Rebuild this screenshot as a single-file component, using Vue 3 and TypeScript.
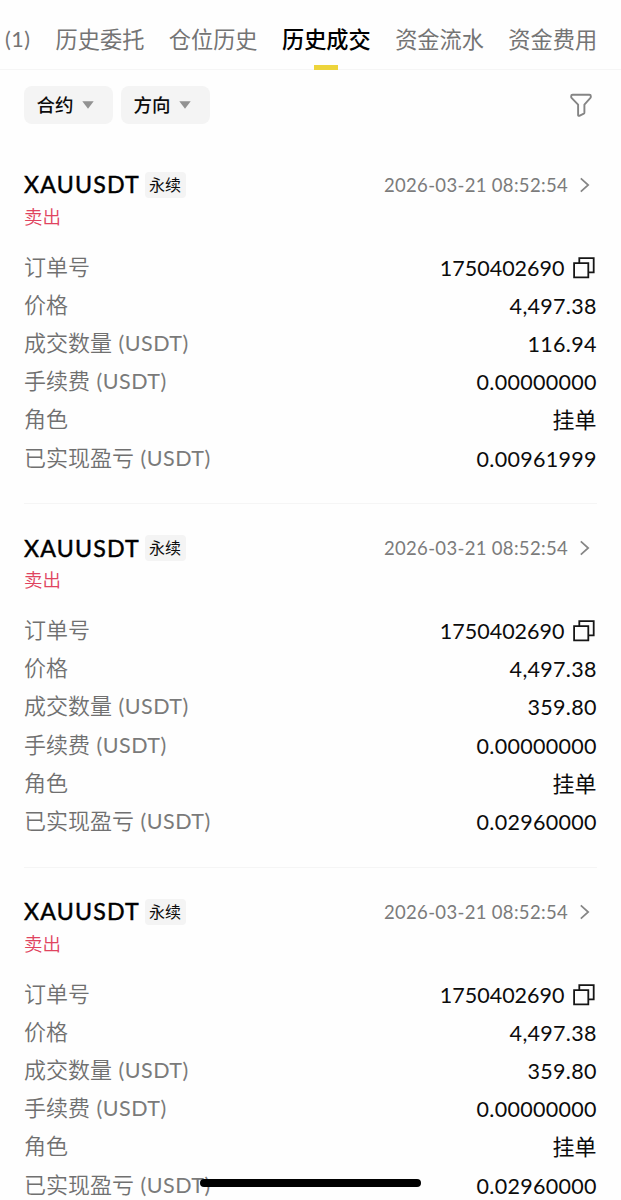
<script setup lang="ts">
interface Field {
  label: string
  unit?: string
  value: string
  copy?: boolean
  cjk?: boolean
}
interface Trade {
  symbol: string
  kind: string
  side: string
  time: string
  fields: Field[]
}

const tabs: string[] = ['历史委托', '仓位历史', '历史成交', '资金流水', '资金费用']
const activeTab = '历史成交'
const filters: string[] = ['合约', '方向']

function makeTrade(amount: string, pnl: string): Trade {
  return {
    symbol: 'XAUUSDT',
    kind: '永续',
    side: '卖出',
    time: '2026-03-21 08:52:54',
    fields: [
      { label: '订单号', value: '1750402690', copy: true },
      { label: '价格', value: '4,497.38' },
      { label: '成交数量', unit: '(USDT)', value: amount },
      { label: '手续费', unit: '(USDT)', value: '0.00000000' },
      { label: '角色', value: '挂单', cjk: true },
      { label: '已实现盈亏', unit: '(USDT)', value: pnl },
    ],
  }
}

const trades: Trade[] = [
  makeTrade('116.94', '0.00961999'),
  makeTrade('359.80', '0.02960000'),
  makeTrade('359.80', '0.02960000'),
]
</script>

<template>
  <main class="screen">
    <nav class="tabs">
      <span class="count">(1)</span>
      <span v-for="t in tabs" :key="t" class="tab" :class="{ active: t === activeTab }">{{ t }}</span>
    </nav>

    <div class="filters">
      <button v-for="f in filters" :key="f" class="chip" type="button">
        <span>{{ f }}</span>
        <svg width="12" height="8" viewBox="0 0 12 8"><path d="M0.3 0.2H11.7L6 7.8Z" fill="#929292" /></svg>
      </button>
      <svg class="funnel" width="24" height="26" viewBox="0 0 24 26">
        <path
          d="M3.6 2.8H20.4Q21.8 2.8 21.8 4V5Q21.8 5.6 21.2 6.2L15.4 12.6V20.6Q15.4 21.4 14.8 21.7L10.3 23.8Q9.1 24.2 9.1 23V12.6L2.8 6.2Q2.2 5.6 2.2 5V4Q2.2 2.8 3.6 2.8Z"
          fill="none" stroke="#858585" stroke-width="1.9" stroke-linejoin="round"
        />
      </svg>
    </div>

    <section v-for="(trade, i) in trades" :key="i" class="card">
      <header class="head">
        <span class="symbol">{{ trade.symbol }}</span>
        <span class="badge">{{ trade.kind }}</span>
        <span class="time">{{ trade.time }}</span>
        <svg class="chevron" width="10" height="16" viewBox="0 0 10 16">
          <path d="M0.8 1.4L8.2 8L0.8 14.6" fill="none" stroke="#858585" stroke-width="1.7" />
        </svg>
      </header>
      <div class="side">{{ trade.side }}</div>
      <div v-for="f in trade.fields" :key="f.label" class="row">
        <span class="label">{{ f.label }}<span v-if="f.unit" class="unit">{{ f.unit }}</span></span>
        <span class="value" :class="{ cjk: f.cjk, decimal: f.value.includes('.') }">{{ f.value }}</span>
        <svg v-if="f.copy" class="copy" width="22" height="22" viewBox="0 0 22 22">
          <path d="M1.1 6.1H15.3V20.4H1.1Z M6.3 6V1.1H20.7V15.3H15.5" fill="none" stroke="#161616" stroke-width="1.8" />
        </svg>
      </div>
    </section>

    <div class="home-bar"></div>
  </main>
</template>

<style>
body {
  margin: 0;
  background: #fff;
}
</style>

<style scoped>
.screen {
  position: relative;
  width: 621px;
  height: 1200px;
  overflow: hidden;
  box-sizing: border-box;
  background: #fefefe;
  color: #0c0c0c;
  font-family: Lato, "Noto Sans CJK SC", sans-serif;
}
.tabs {
  display: flex;
  height: 69px;
  border-bottom: 1px solid #f5f5f5;
  font-size: 22.2px;
  line-height: 80px;
  color: #747474;
  white-space: nowrap;
}
.count {
  flex: none;
  width: 50.6px;
  padding-left: 5px;
  font-size: 21.5px;
  letter-spacing: 0.5px;
  line-height: 79px;
}
.tab {
  position: relative;
  width: 89px;
  margin-right: 24.2px;
  flex: none;
}
.active {
  color: #000;
  font-weight: 500;
}
.active::after {
  content: "";
  position: absolute;
  left: 32px;
  bottom: -1px;
  width: 24px;
  height: 5px;
  background: #edd43b;
}
.filters {
  display: flex;
  align-items: center;
  gap: 8.5px;
  height: 38px;
  padding: 16px 28px 16.5px 24px;
}
.chip {
  display: flex;
  align-items: center;
  gap: 8px;
  width: 88.5px;
  height: 38px;
  padding: 0 0 0 12.5px;
  border: 0;
  border-radius: 8px;
  background: #f4f4f4;
  color: #0c0c0c;
  font: 500 18.5px/36px Lato, "Noto Sans CJK SC", sans-serif;
}
.funnel {
  margin-left: auto;
}
.card {
  box-sizing: border-box;
  height: 363.5px;
  margin: 0 24.5px 0 24px;
  padding-top: 30px;
  border-bottom: 1px solid #f5f5f5;
}
.head {
  display: flex;
  align-items: center;
  height: 28px;
}
.symbol {
  width: 120.5px;
  font-size: 23.2px;
  letter-spacing: 1.2px;
  line-height: 26px;
  margin-top: -1px;
  color: #000;
  -webkit-text-stroke: 0.45px #000;
}
.badge {
  width: 41px;
  height: 26px;
  border-radius: 4px;
  background: #f4f4f4;
  font-size: 16px;
  line-height: 25px;
  text-align: center;
}
.time {
  margin-left: auto;
  font-size: 18.5px;
  letter-spacing: 0.32px;
  line-height: 28px;
  color: #7b7b7b;
}
.chevron {
  margin: 0 7px 0 11.5px;
}
.side {
  height: 28px;
  margin: 4px 0 18px;
  font-size: 18.5px;
  font-weight: 350;
  line-height: 28px;
  color: #e0445f;
}
.row {
  display: flex;
  align-items: center;
  height: 38.2px;
}
.label {
  flex: 1;
  font-size: 22px;
  font-weight: 350;
  line-height: 36px;
  color: #707070;
  margin-top: -2px;
}
.unit {
  margin-left: 6.5px;
  font-size: 21.5px;
  font-weight: 400;
  letter-spacing: 0.5px;
  color: #7a7a7a;
}
.value {
  font-size: 21.5px;
  line-height: 38px;
}
.value.decimal {
  margin-right: -0.3px;
  letter-spacing: 0.3px;
}
.value.cjk {
  font-size: 22px;
}
.copy {
  margin-left: 8.5px;
  margin-right: 1.5px;
}
.home-bar {
  position: absolute;
  left: 200px;
  top: 1179px;
  width: 221px;
  height: 8px;
  border-radius: 4px;
  background: #000;
}
</style>
